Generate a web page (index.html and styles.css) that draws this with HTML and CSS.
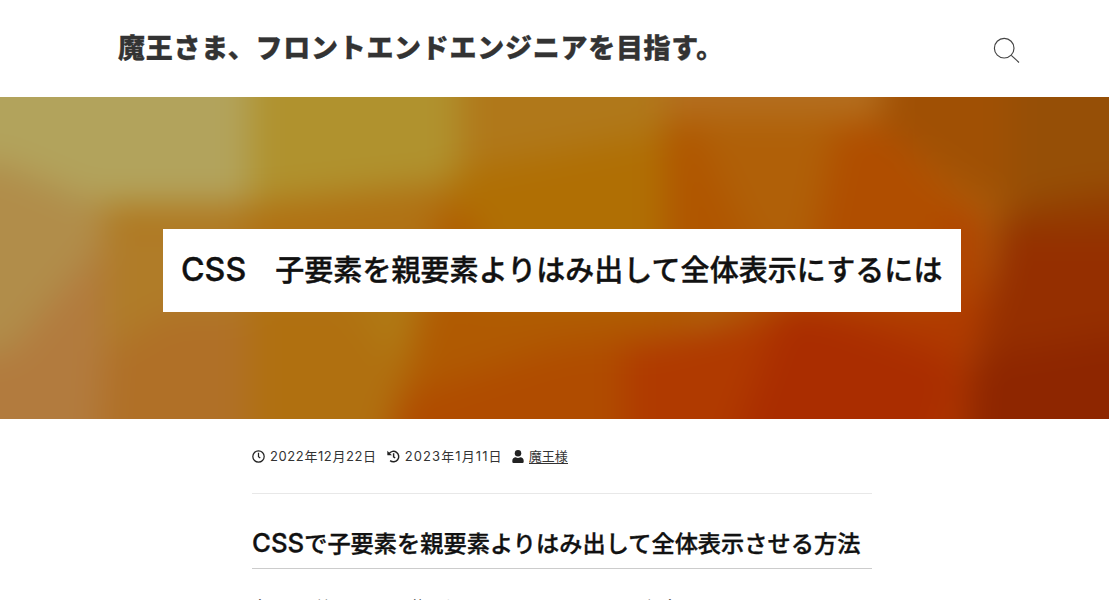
FILE: index.html
```html
<!DOCTYPE html>
<html lang="ja">
<head>
<meta charset="utf-8">
<title>CSS 子要素を親要素よりはみ出して全体表示にするには</title>
<link rel="stylesheet" href="styles.css">
</head>
<body>
<header class="site-header">
  <a class="site-title">魔王さま、フロントエンドエンジニアを目指す。</a>
  <svg class="search" viewBox="0 0 28 28" fill="none" stroke="#444" stroke-width="1.15"><circle cx="11.2" cy="11.2" r="9.8"/><path d="M18.3 18.3 26 25.5"/></svg>
</header>
<section class="hero">
  <svg class="hero-art" viewBox="0 0 1109 322" preserveAspectRatio="none">
    <defs><filter id="soft" filterUnits="userSpaceOnUse" x="-100" y="-100" width="1309" height="522" color-interpolation-filters="sRGB"><feGaussianBlur stdDeviation="17"/></filter></defs>
    <g filter="url(#soft)">
      <path fill="#b07214" d="M-90-90H1200V410H-90z"/>
      <path fill="#b2a35c" d="M-90-90H250V108H100L0 66H-90z"/>
      <path fill="#b0922e" d="M250-90H460V84L250 106z"/>
      <path fill="#b0781a" d="M460-90H680V35L460 75z"/>
      <path fill="#b06f04" d="M453 75 665 35V220H453z"/>
      <path fill="#b18d4a" d="M-90 66H0L100 108 115 140 25 262H-90z"/>
      <path fill="#b27b3e" d="M112 135 98 410H-90V262L10 255z"/>
      <path fill="#b07c28" d="M105 124H245V220L105 260z"/>
      <path fill="#b07027" d="M105 255 170 215H250V410H95z"/>
      <path fill="#b07010" d="M250 210H415V260L390 410H250z"/>
      <path fill="#b07a14" d="M350 200H420L403 275z"/>
      <path fill="#b05a02" d="M425 200H690V230L560 260 400 300z"/>
      <path fill="#b05c00" d="M435 150V128L450 105 480 135V210H435z"/>
      <path fill="#b04c00" d="M400 300 560 250 645 240V410H370z"/>
      <path fill="#b46e20" d="M665-90H900V12L840 18 665 16z"/>
      <path fill="#b05600" d="M665 22H840V210H665z"/>
      <path fill="#b06008" d="M690 20H836L805 180 750 145z"/>
      <path fill="#b04e00" d="M842 24H880L980 115 970 230H800z"/>
      <path fill="#a05004" d="M890-90H1040V100L985 108 880 26z"/>
      <path fill="#964f06" d="M1010-90H1200V70L1010 115z"/>
      <path fill="#933c00" d="M1200 75V150H995V115z"/>
      <path fill="#b14200" d="M945 125 985 110 985 250 940 250z"/>
      <path fill="#952f00" d="M1000 135H1200V260H975z"/>
      <path fill="#8e2600" d="M975 260 1200 225V410H930z"/>
      <path fill="#b03a00" d="M625 250 800 205 975 210 960 410H625z"/>
      <path fill="#aa2d00" d="M785 205 850 225 960 265 925 410H710z"/>
    </g>
  </svg>
  <h1 class="entry-title"><span class="latin">CSS</span>　子要素を親要素よりはみ出して全体表示にするには</h1>
</section>
<main class="entry">
  <div class="meta">
    <span class="meta-item"><svg class="icon" viewBox="0 0 512 512"><path fill="none" stroke="#222" stroke-width="49" d="M256 32a224 224 0 1 0 0 448 224 224 0 1 0 0-448zM256 110v158l70 50"/></svg><span class="date">2022年12月22日</span></span>
    <span class="meta-item"><svg class="icon" viewBox="0 0 512 512"><path fill="none" stroke="#222" stroke-width="58" d="M82 145A207 207 0 1 1 123 418M260 125v143l62 46"/><path fill="#222" d="M12 28 195 211H36q-24 0-24-24z"/></svg><span class="date date-updated">2023年1月11日</span></span>
    <span class="meta-item author"><svg class="icon icon-user" viewBox="0 0 448 512" fill="#222"><circle cx="224" cy="128" r="128"/><path d="M314 288c74 0 134 60 134 134v42q0 48-48 48H48q-48 0-48-48v-42c0-74 60-134 134-134 60 30 120 30 180 0z"/></svg><a class="author-name">魔王様</a></span>
  </div>
  <h2 class="section-title"><span class="latin">CSS</span>で子要素を親要素よりはみ出して全体表示させる方法</h2>
  <p class="body-text">今回は環境によって、使わないCSSのしたりしているの場合する</p>
</main>
</body>
</html>
```
FILE: styles.css
```css
* { box-sizing: border-box; }
body { margin: 0; height: 600px; overflow: hidden; background: #fff; color: #111; font-family: "Noto Sans CJK JP", sans-serif; }
.site-header { height: 97px; padding: 0 88px 0 118px; display: flex; justify-content: space-between; align-items: center; }
.site-title { margin-bottom: 3px; font-size: 27px; font-weight: 900; letter-spacing: .72px; line-height: 40px; color: #333; white-space: nowrap; -webkit-text-stroke: .3px #333; }
.search { width: 28px; height: 28px; margin-top: 4px; }
.hero { height: 322px; display: grid; overflow: hidden; }
.hero-art { grid-area: 1 / 1; width: 1109px; height: 322px; }
.entry-title { grid-area: 1 / 1; z-index: 1; width: 798px; height: 83px; margin: 132px 0 0 163px; padding-left: 18px; background: #fff; font-size: 29px; font-weight: 500; line-height: 79px; white-space: nowrap; letter-spacing: .06px; -webkit-text-stroke: .4px #111; }
.latin { font-family: Inter, sans-serif; font-weight: 500; font-size: 1.11em; line-height: 1; letter-spacing: 0; }
.entry { width: 620px; margin-left: 252px; }
.meta { height: 75px; border-bottom: 1px solid #e8e8e8; display: flex; gap: 10px; font-size: 13px; line-height: 74px; color: #333; }
.meta-item { display: flex; align-items: center; gap: 5px; white-space: nowrap; }
.icon { width: 13px; height: 13px; }
.icon-user { width: 12px; }
.date { font-family: Inter, "Noto Sans CJK JP", sans-serif; letter-spacing: .6px; }
.date-updated { letter-spacing: 1.1px; margin-right: -1px; }
.author-name { line-height: 15px; border-bottom: 1px solid #333; }
.section-title { margin: 32px 0 0; height: 43px; border-bottom: 1px solid #ccc; font-size: 23.2px; font-weight: 500; line-height: 32px; letter-spacing: .04px; white-space: nowrap; -webkit-text-stroke: .35px #111; }
.body-text { margin: 23px 0 0; font-size: 16px; line-height: 28px; color: #333; white-space: nowrap; }
```
